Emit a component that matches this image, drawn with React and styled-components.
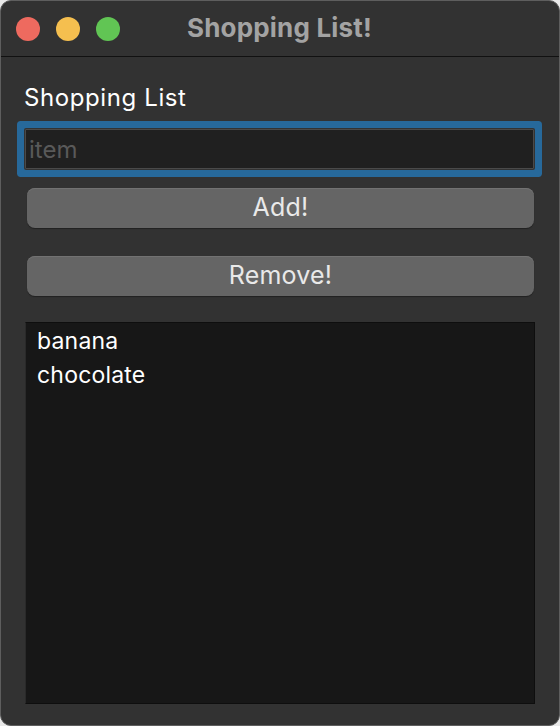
import { useState } from "react";
import styled, { createGlobalStyle } from "styled-components";

const GlobalStyle = createGlobalStyle`
  html, body {
    margin: 0;
    padding: 0;
    background: #e9e9e9;
  }
  * {
    box-sizing: border-box;
  }
`;

const Window = styled.div`
  width: 560px;
  height: 726px;
  background-color: #323232;
  border: 1px solid #5e5e5e;
  border-radius: 11px;
  overflow: hidden;
  display: flex;
  flex-direction: column;
  font-family: Inter, "Liberation Sans", sans-serif;
`;

const TitleBar = styled.div`
  height: 56px;
  flex-shrink: 0;
  display: grid;
  grid-template-columns: 1fr auto 1fr;
  align-items: center;
  padding: 0 0 0 15px;
  border-bottom: 1px solid #111111;
`;

const Lights = styled.div`
  display: flex;
  gap: 16px;
  margin-top: 1px;
`;

const Light = styled.span`
  width: 24px;
  height: 24px;
  border-radius: 50%;
  background-color: ${(p) => p.color};
`;

const Title = styled.div`
  font-size: 26px;
  font-weight: 700;
  color: #a3a3a3;
  letter-spacing: 0.2px;
  margin: -2px 0 0 -16px;
`;

const Content = styled.div`
  flex: 1;
  display: flex;
  flex-direction: column;
  padding: 27px 24px 21px 23px;
`;

const Label = styled.div`
  font-size: 24px;
  line-height: 28px;
  color: #ffffff;
  letter-spacing: 0.6px;
  margin-bottom: 17px;
`;

const Field = styled.input`
  height: 40px;
  margin: 0 1px 0 1px;
  padding: 0 3px;
  background-color: #202020;
  border: 1px solid #4a4a4a;
  border-radius: 1px;
  color: #ffffff;
  font-family: inherit;
  font-size: 24px;
  outline: none;
  box-shadow: 0 0 0 1px #333333, 0 0 0 8px #27699b;
  &::placeholder {
    color: #595959;
  }
`;

const Button = styled.button`
  height: 40px;
  margin: ${(p) => p.top}px 1px 0 3px;
  border: none;
  border-radius: 8px;
  background-color: #656565;
  box-shadow: inset 0 1px 0 #727272, 0 1px 1px rgba(0, 0, 0, 0.35);
  color: #e9e9e9;
  font-family: inherit;
  font-size: 25px;
  letter-spacing: 0.2px;
  padding: 0 0 2px;
  cursor: pointer;
`;

const List = styled.ul`
  flex: 1;
  list-style: none;
  margin: 26px 0 0 1px;
  padding: 1px 11px;
  background-color: #171717;
  border: 1px solid #0e0e0e;
  border-left-color: #2a2a2a;
`;

const Item = styled.li`
  font-size: 23px;
  line-height: 34px;
  letter-spacing: 0.2px;
  color: #ffffff;
`;

export default function App() {
  const [items, setItems] = useState(["banana", "chocolate"]);
  const [value, setValue] = useState("");

  const handleAdd = () => {
    if (value.trim() === "") return;
    setItems([...items, value.trim()]);
    setValue("");
  };
  const handleRemove = () => {
    setItems(items.slice(0, -1));
  };

  return (
    <>
      <GlobalStyle />
      <Window>
        <TitleBar>
          <Lights>
            <Light color="#ee6a5f" />
            <Light color="#f5bf4f" />
            <Light color="#61c554" />
          </Lights>
          <Title>Shopping List!</Title>
          <span />
        </TitleBar>
        <Content>
          <Label>Shopping List</Label>
          <Field
            placeholder="item"
            value={value}
            onChange={(e) => setValue(e.target.value)}
          />
          <Button top={19} onClick={handleAdd}>
            Add!
          </Button>
          <Button top={28} onClick={handleRemove}>
            Remove!
          </Button>
          <List>
            {items.map((item, i) => (
              <Item key={i}>{item}</Item>
            ))}
          </List>
        </Content>
      </Window>
    </>
  );
}
